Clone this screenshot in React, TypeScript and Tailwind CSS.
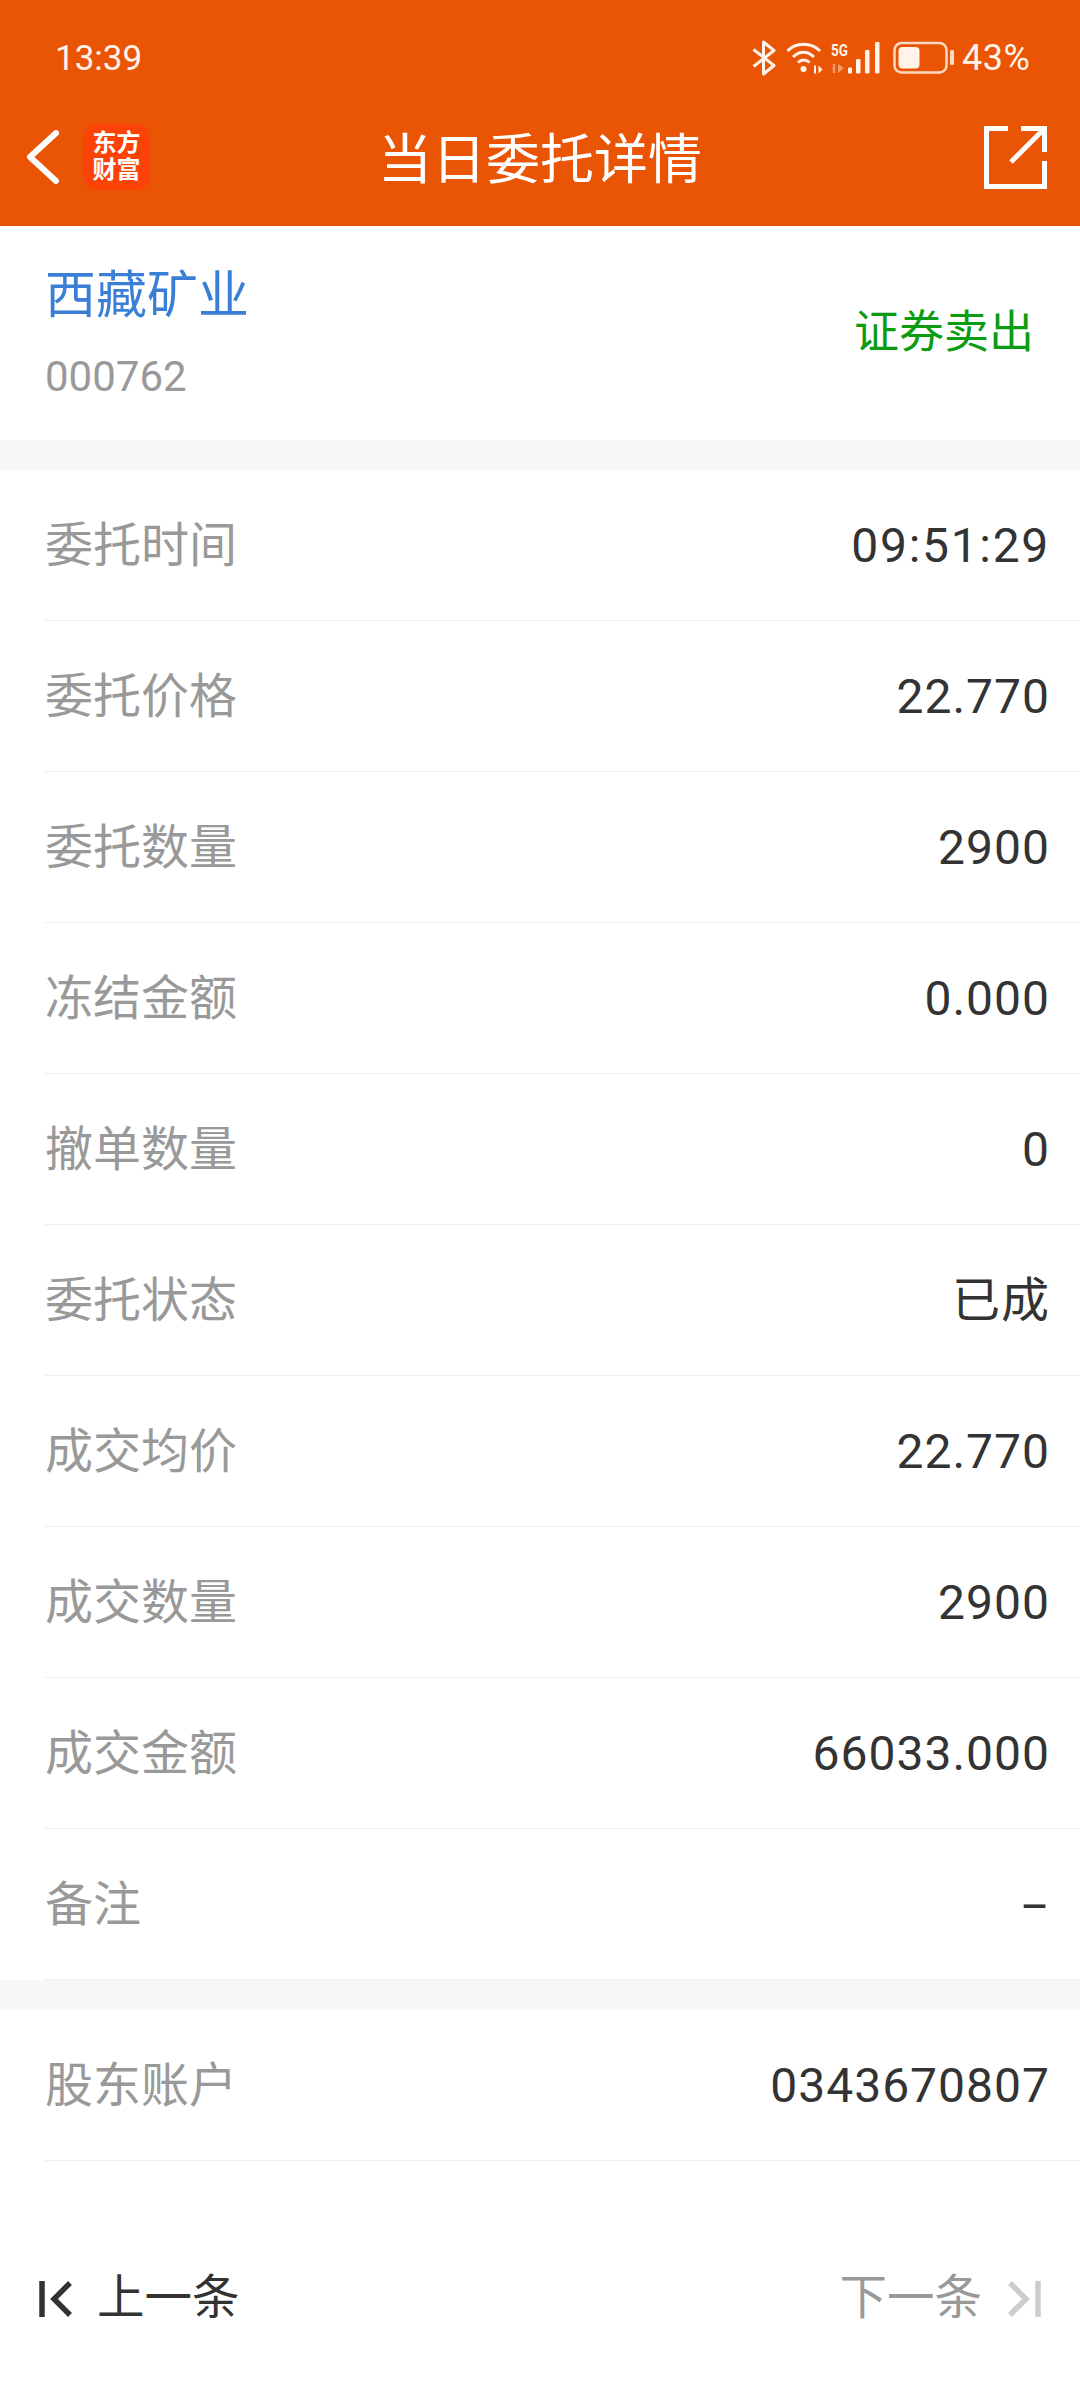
const rows: [string, string][] = [
  ['委托时间', '09:51:29'],
  ['委托价格', '22.770'],
  ['委托数量', '2900'],
  ['冻结金额', '0.000'],
  ['撤单数量', '0'],
  ['委托状态', '已成'],
  ['成交均价', '22.770'],
  ['成交数量', '2900'],
  ['成交金额', '66033.000'],
  ['备注', '-'],
]

function StatusIcons() {
  return (
    <div className="flex items-center">
      {/* bluetooth */}
      <svg width="24" height="36" viewBox="0 0 24 36" fill="none" stroke="#fff3ea" strokeWidth="3" className="mr-[10px]">
        <path d="M1.500 9.500 22 25.500 11.500 34V2L22 10.500 1.500 26.500" strokeLinejoin="round" />
      </svg>
      {/* wifi */}
      <svg width="37" height="34" viewBox="0 0 37 34" fill="none" stroke="#fff3ea" strokeWidth="3" className="mr-[8px]">
        <path d="M1.500 10C10 1 25 1 34 10" />
        <path d="M7 16C13.500 9.500 21.500 9.500 28 16" />
        <path d="M12 21.500C15.500 18 20 18 23.500 21.500" />
        <circle cx="17.500" cy="28" r="3" fill="#fff3ea" stroke="none" />
        <path d="M29 24.500v8" strokeWidth="2" />
        <path d="M32.500 24.500v8l4-4z" strokeWidth="0" fill="#fff3ea" />
      </svg>
      {/* 5G + signal */}
      <svg width="50" height="34" viewBox="0 0 50 34" className="mr-[12px]">
        <text x="0" y="15" fontSize="16" fontWeight="700" textLength="17" lengthAdjust="spacingAndGlyphs" fontFamily="Roboto, sans-serif" fill="#fff3ea">5G</text>
        <path d="M3 32V23" stroke="#f59a6a" strokeWidth="2.500" fill="none" />
        <path d="M7 23v9l6-5z" fill="#f59a6a" />
        <rect x="17" y="26.500" width="4" height="6" rx="1" fill="#fff3ea" />
        <rect x="25" y="18" width="4.500" height="14.500" rx="1" fill="#fff3ea" />
        <rect x="34" y="9" width="4.500" height="23.500" rx="1" fill="#fff3ea" />
        <rect x="44" y="1" width="4.500" height="31.500" rx="1" fill="#fff3ea" />
      </svg>
      {/* battery */}
      <svg width="61" height="34" viewBox="0 0 61 34" className="mr-[8px]">
        <rect x="1.500" y="2" width="52" height="29.500" rx="7" fill="none" stroke="#fbd9c2" strokeWidth="2.500" />
        <rect x="5.500" y="6" width="21" height="21.500" rx="4" fill="#fff3ea" />
        <rect x="57" y="9" width="4" height="15" rx="1.500" fill="#fbd9c2" />
      </svg>
      <span className="w-[69px] text-[36px] leading-none text-[#fff3ea] tracking-[0.5px]">43%</span>
    </div>
  )
}

function Row({ label, value }: { label: string; value: string }) {
  // the reference font has wider colons and a longer hyphen than Roboto
  const valueClass = value === '-'
    ? 'inline-block mr-[3px] origin-right scale-x-[1.900]'
    : value.includes(':')
      ? 'tracking-[1.700px]'
      : 'tracking-[1px]'
  return (
    <div className="h-[151px] flex items-center justify-between pl-[45px] pr-[30px] relative shrink-0">
      <span className="text-[48px] text-[#999999]">{label}</span>
      <span className={`text-[48px] text-[#333333] ${valueClass}`}>{value}</span>
      <div className="absolute left-[45px] right-0 bottom-0 h-[1px] bg-[#eeeeee]" />
    </div>
  )
}

export default function App() {
  return (
    <div
      className="w-[1080px] h-[2388px] bg-white flex flex-col overflow-hidden"
      style={{ fontFamily: 'Roboto, "Noto Sans CJK SC", sans-serif' }}
    >
      {/* header */}
      <div className="h-[226px] bg-[#e95504] shrink-0 flex flex-col">
        <div className="h-[88px] flex items-center justify-between pl-[55px] pr-[49px] pt-[28px]">
          <span className="text-[35px] leading-none text-[#fff3ea]">13:39</span>
          <StatusIcons />
        </div>
        <div className="flex-1 flex items-center relative pl-[27px] pr-[33px]">
          <svg width="32" height="54" viewBox="0 0 32 54" fill="none" stroke="#ffffff" strokeWidth="6" strokeLinecap="round" strokeLinejoin="round">
            <path d="M29 3 3 27l26 24" />
          </svg>
          <div className="ml-[24px] w-[67px] h-[66px] rounded-[14px] bg-[#fb4308] flex flex-col items-center justify-center text-white text-[24px] leading-[27px] font-bold">
            <span>东方</span>
            <span>财富</span>
          </div>
          <span className="absolute left-0 right-0 text-center text-[54px] text-white pt-[6px]">当日委托详情</span>
          <svg width="63" height="63" viewBox="0 0 63 63" fill="none" stroke="#ffffff" strokeWidth="5" className="ml-auto">
            <path d="M24 2.500H2.500V60.500H60.500V35" />
            <path d="M27 36 58 5" />
            <path d="M37 2.500H60.500V26" />
          </svg>
        </div>
      </div>

      {/* stock */}
      <div className="h-[214px] shrink-0 flex items-center justify-between pl-[45px] pr-[46px]">
        <div className="flex flex-col pb-[3px]">
          <span className="text-[51px] leading-[70px] text-[#3a7fd5]">西藏矿业</span>
          <span className="text-[42px] leading-[50px] mt-[21px] text-[#999999]">000762</span>
        </div>
        <span className="text-[45px] text-[#0b9c12]">证券卖出</span>
      </div>
      <div className="h-[30px] shrink-0 bg-[#f5f7f9]" />

      {rows.map(([label, value]) => (
        <Row key={label} label={label} value={value} />
      ))}
      <div className="h-[30px] shrink-0 bg-[#f5f7f9]" />
      <Row label="股东账户" value="0343670807" />

      {/* pager */}
      <div className="h-[70px] shrink-0 flex items-center justify-between pl-[39px] pr-[39px] mt-[103px]">
        <div className="flex items-center">
          <svg width="33" height="36" viewBox="0 0 33 36" fill="none" stroke="#333333" strokeWidth="5.500">
            <path d="M3 0V36" />
            <path d="M31 2 15 18l16 16" />
          </svg>
          <span className="ml-[25px] text-[47.500px] text-[#333333]">上一条</span>
        </div>
        <div className="flex items-center">
          <span className="text-[47.500px] text-[#999999]">下一条</span>
          <svg width="33" height="36" viewBox="0 0 33 36" fill="none" stroke="#cccccc" strokeWidth="5.500" className="ml-[26px]">
            <path d="M2 2l16 16L2 34" />
            <path d="M30 0V36" />
          </svg>
        </div>
      </div>
    </div>
  )
}
